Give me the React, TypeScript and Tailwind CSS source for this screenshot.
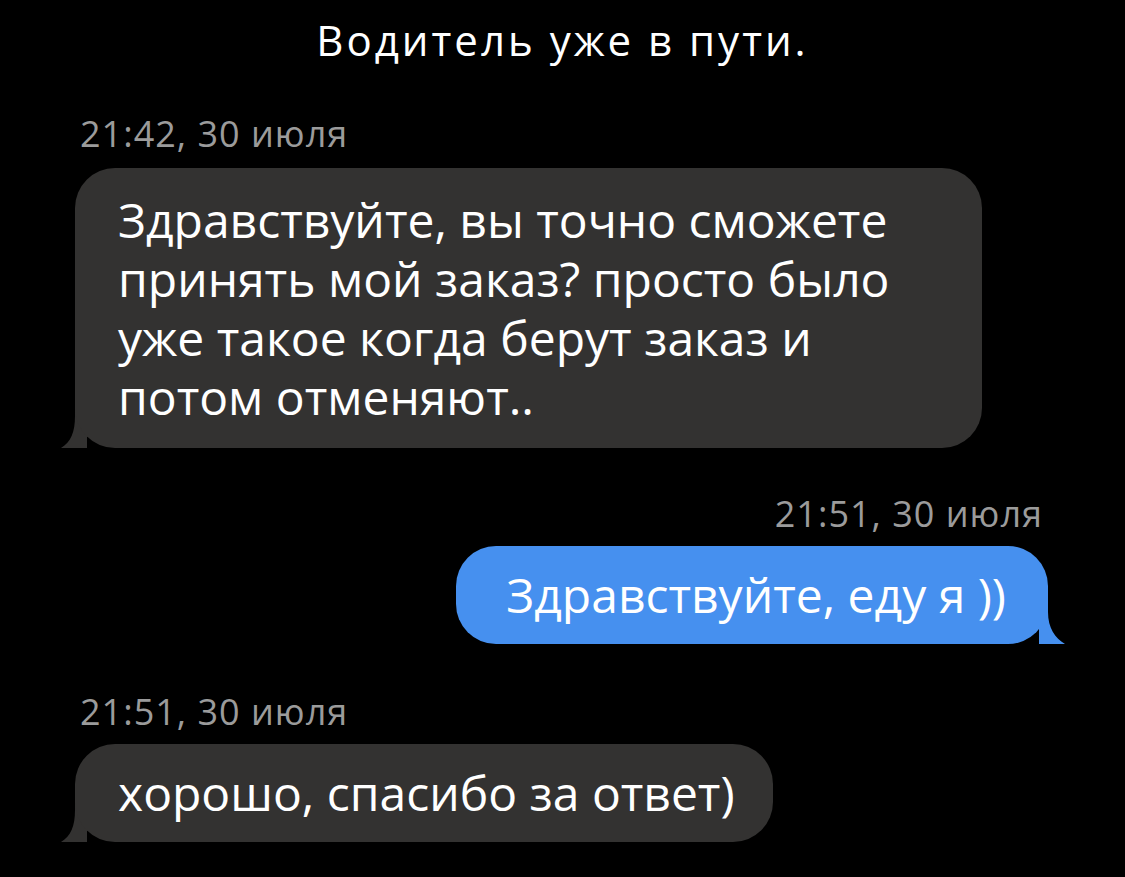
import React from 'react'

// чат с водителем — тёмная тема

const font = { fontFamily: '"Open Sans", "Noto Sans", sans-serif' }

const TailLeft: React.FC<{ color: string }> = ({ color }) => (
  <svg className="absolute left-[-14px] bottom-0" width="40" height="48" viewBox="0 0 40 48">
    <path d="M14 0 L26 0 L26 48 L0 48 C10 42 14 32 14 16 Z" fill={color} />
  </svg>
)

const TailRight: React.FC<{ color: string }> = ({ color }) => (
  <svg className="absolute right-[-17px] bottom-0" width="40" height="48" viewBox="0 0 40 48">
    <path d="M23 0 L14 0 L14 48 L40 48 C30 42 23 32 23 16 Z" fill={color} />
  </svg>
)

export default function App() {
  return (
    <div className="w-[1125px] h-[877px] bg-black text-white overflow-hidden" style={font}>
      <div className="pt-[14px] text-center text-[42px] leading-[52px] tracking-[3px]">Водитель уже в пути.</div>

      <div className="mt-[48px] pl-[80px] text-[36px] leading-[40px] text-[#9b9b9b] tracking-[1px]">21:42, 30 июля</div>
      <div className="mt-[14px] ml-[75px] relative w-[907px]">
        <TailLeft color="#333231" />
        <div className="relative bg-[#333231] rounded-[40px] pl-[43px] pr-[20px] pt-[22px] pb-[22px] text-[48px] leading-[59px]">
          Здравствуйте, вы точно сможете
          <br />
          принять мой заказ? просто было
          <br />
          уже такое когда берут заказ и
          <br />
          потом отменяют..
        </div>
      </div>

      <div className="mt-[46px] pr-[82px] text-right text-[36px] leading-[40px] text-[#9b9b9b] tracking-[1px]">21:51, 30 июля</div>
      <div className="mt-[12px] flex justify-end pr-[77px]">
        <div className="relative">
          <TailRight color="#4690ef" />
          <div className="relative bg-[#4690ef] rounded-[40px] pl-[50px] pr-[42px] h-[98px] flex items-center text-[48px]">
            Здравствуйте, еду я ))
          </div>
        </div>
      </div>

      <div className="mt-[48px] pl-[80px] text-[36px] leading-[40px] text-[#9b9b9b] tracking-[1px]">21:51, 30 июля</div>
      <div className="mt-[12px] ml-[75px] flex">
        <div className="relative">
          <TailLeft color="#333231" />
          <div className="relative bg-[#333231] rounded-[40px] pl-[43px] pr-[38px] h-[98px] flex items-center text-[48px]">
            хорошо, спасибо за ответ)
          </div>
        </div>
      </div>
    </div>
  )
}
